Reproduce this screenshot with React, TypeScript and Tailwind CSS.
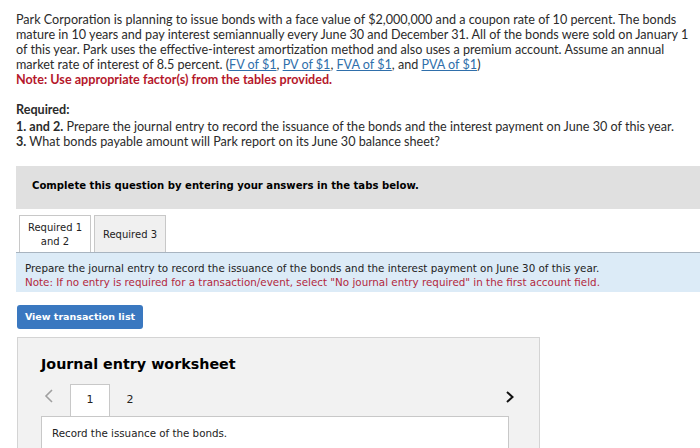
import React from "react";

const sans = { fontFamily: "Lato, 'Open Sans', sans-serif" };
const verd = { fontFamily: "'DejaVu Sans', Verdana, sans-serif" };

export default function App() {
  return (
    <div className="w-[700px] h-[448px] overflow-hidden bg-white text-[#222]">
      <div className="pl-4 pt-[12px] text-[12.6px] leading-[15px] text-[#2b2b2b] whitespace-nowrap" style={sans}>
        <p>
          Park Corporation is planning to issue bonds with a face value of $2,000,000 and a coupon rate of 10 percent. The bonds<br />
          mature in 10 years and pay interest semiannually every June 30 and December 31. All of the bonds were sold on January 1<br />
          of this year. Park uses the effective-interest amortization method and also uses a premium account. Assume an annual<br />
          market rate of interest of 8.5 percent. (<span className="text-[#2f6fab] underline">FV of $1</span>, <span className="text-[#2f6fab] underline">PV of $1</span>, <span className="text-[#2f6fab] underline">FVA of $1</span>, and <span className="text-[#2f6fab] underline">PVA of $1</span>)
        </p>
        <p className="font-bold text-[#b5172b]">Note: Use appropriate factor(s) from the tables provided.</p>
        <p className="mt-[15px] font-bold">Required:</p>
        <p className="mt-[2px]"><span className="font-bold">1. and 2.</span> Prepare the journal entry to record the issuance of the bonds and the interest payment on June 30 of this year.</p>
        <p><span className="font-bold">3.</span> What bonds payable amount will Park report on its June 30 balance sheet?</p>
      </div>

      <div className="ml-4 mt-[17px] h-[43px] bg-[#e0e0e0] flex items-center pl-4 pb-[3px] text-[10.1px] font-bold text-black" style={verd}>
        Complete this question by entering your answers in the tabs below.
      </div>

      <div className="ml-4 mt-[6px]" style={verd}>
        <div className="flex items-end pl-[3px] gap-[3px] text-[10px] leading-[14px]">
          <div className="w-[72px] h-[37px] bg-white border border-[#c8c8c8] border-b-0 flex items-center justify-center text-center text-[#222] pt-[2px]">
            Required 1<br />and 2
          </div>
          <div className="w-[72px] h-[37px] bg-[#f0f0f0] border border-[#c8c8c8] border-b-0 flex items-center justify-center text-[#222] pt-[2px]">
            Required 3
          </div>
        </div>
        <div className="h-[40px] bg-[#dcebf7] border-t border-[#a8b4c0] pl-[9px] pt-[8px] text-[10.35px] leading-[14px] whitespace-nowrap">
          <div className="text-[#222]">Prepare the journal entry to record the issuance of the bonds and the interest payment on June 30 of this year.</div>
          <div className="text-[#b3283d]">Note: If no entry is required for a transaction/event, select "No journal entry required" in the first account field.</div>
        </div>
        <button className="mt-[13px] ml-[1px] w-[126px] h-[24px] rounded-[3px] bg-[#3a78c0] text-white text-[9.5px] font-bold flex items-center justify-center">
          View transaction list
        </button>
        <div className="mt-[8px] ml-[1px] w-[523px] h-[130px] bg-[#f2f2f2] border border-[#d4d4d4] border-b-0 pl-[23px] pr-[30px] pt-[16px]">
          <div className="text-[14.3px] font-bold text-black leading-[20px]">Journal entry worksheet</div>
          <div className="mt-[10px] flex items-end h-[32px] relative">
            <span className="absolute left-[3px] top-[5px]">
              <svg width="10" height="14" viewBox="0 0 10 14"><path d="M8 1 L2 7 L8 13" fill="none" stroke="#a0a0a0" strokeWidth="1.6" /></svg>
            </span>
            <div className="ml-[29px] w-[40px] h-[32px] bg-white border border-[#c8c8c8] border-b-0 flex items-center justify-center text-[11px] text-[#222]">1</div>
            <div className="w-[40px] h-[32px] flex items-center justify-center text-[11px] text-[#222]">2</div>
            <span className="absolute right-[-6px] top-[6px]">
              <svg width="10" height="14" viewBox="0 0 10 14"><path d="M2 2 L7.5 7 L2 12" fill="none" stroke="#111" strokeWidth="2" /></svg>
            </span>
          </div>
          <div className="h-[60px] bg-white border border-[#c8c8c8] border-b-0 pl-[10px] pt-[9px] text-[10.3px] text-[#222]">
            Record the issuance of the bonds.
          </div>
        </div>
      </div>
    </div>
  );
}
